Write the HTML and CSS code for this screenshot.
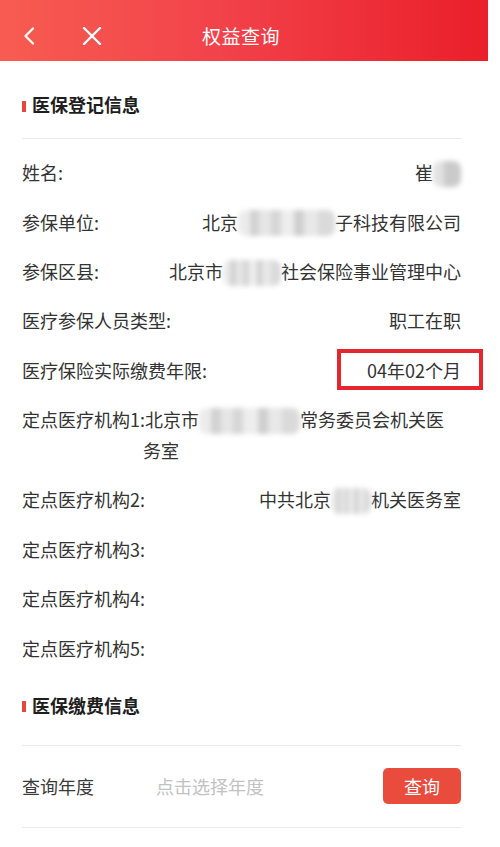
FILE: index.html
```html
<!DOCTYPE html>
<html lang="zh-CN">
<head>
<meta charset="utf-8">
<title>权益查询</title>
<link rel="stylesheet" href="styles.css">
</head>
<body>
<div class="app">
  <header class="topbar">
    <div class="nav-icons">
      <svg class="ico-back" width="12" height="18" viewBox="0 0 12 18"><polyline points="10,1.5 2.5,9 10,16.5" fill="none" stroke="#fff" stroke-width="2.2" stroke-linecap="round" stroke-linejoin="round"/></svg>
      <svg class="ico-close" width="20" height="18" viewBox="0 0 20 18"><path d="M2 1 L18 17 M18 1 L2 17" fill="none" stroke="#fff" stroke-width="2.4" stroke-linecap="round"/></svg>
    </div>
    <div class="topbar-title">权益查询</div>
    <div class="nav-spacer"></div>
  </header>

  <section class="section">
    <h2 class="sec-title first"><span class="bar"></span>医保登记信息</h2>
    <div class="list">
      <div class="row"><span class="label">姓名:</span><span class="value">崔<span class="mosaic m-name"></span></span></div>
      <div class="row"><span class="label">参保单位:</span><span class="value">北京<span class="mosaic m-unit"></span>子科技有限公司</span></div>
      <div class="row"><span class="label">参保区县:</span><span class="value">北京市<span class="mosaic m-area"></span>社会保险事业管理中心</span></div>
      <div class="row"><span class="label">医疗参保人员类型:</span><span class="value">职工在职</span></div>
      <div class="row"><span class="label">医疗保险实际缴费年限:</span><span class="value marked">04年02个月</span></div>
      <div class="row block"><span class="label">定点医疗机构1:</span><span class="value-inline">北京市<span class="mosaic m-org1"></span>常务委员会机关医</span><span class="cont">务室</span></div>
      <div class="row"><span class="label">定点医疗机构2:</span><span class="value">中共北京<span class="mosaic m-org2"></span>机关医务室</span></div>
      <div class="row"><span class="label">定点医疗机构3:</span><span class="value"></span></div>
      <div class="row"><span class="label">定点医疗机构4:</span><span class="value"></span></div>
      <div class="row"><span class="label">定点医疗机构5:</span><span class="value"></span></div>
    </div>
  </section>

  <section class="section">
    <h2 class="sec-title second"><span class="bar"></span>医保缴费信息</h2>
    <div class="query-row">
      <span class="q-label">查询年度</span>
      <span class="q-placeholder">点击选择年度</span>
      <button class="q-btn">查询</button>
    </div>
  </section>
</div>
</body>
</html>
```

FILE: styles.css
```css
* { box-sizing: border-box; }
html, body { margin: 0; padding: 0; background: #fff; }
body {
  font-family: "Noto Sans CJK SC", "Noto Sans", sans-serif;
  color: #333;
  font-size: 18px;
}
.app { width: 488px; }

.topbar {
  height: 61px;
  padding-top: 11px;
  display: grid;
  grid-template-columns: 112px 1fr 118px;
  align-items: center;
  background: linear-gradient(90deg, #f75c51 0%, #f2424a 45%, #ea1f2a 100%);
  color: #fff;
}
.nav-icons {
  display: flex;
  align-items: center;
  padding-left: 23px;
  gap: 47px;
}
.ico-back, .ico-close { display: block; }
.topbar-title {
  text-align: center;
  font-size: 19px;
  letter-spacing: 0.5px;
  line-height: 26px;
}

.section { padding: 0 27px 0 22px; }
.sec-title {
  margin: 0;
  display: flex;
  align-items: center;
  font-size: 18px;
  font-weight: 700;
  line-height: 25px;
  color: #1e1e1e;
  border-bottom: 1px solid #e9e9e9;
}
.sec-title.first { padding: 31px 0 21px; }
.sec-title.second { padding: 20px 0 27px; }
.bar {
  width: 4px;
  height: 11px;
  margin: 3px 6px 0 0;
  background: #e5473c;
  flex-shrink: 0;
}

.list { padding-top: 9px; }
.row {
  display: flex;
  justify-content: space-between;
  padding: 9.2px 0;
  line-height: 31px;
  white-space: nowrap;
}
.row.block { display: block; }
.label { flex-shrink: 0; }
.value { text-align: right; }
.cont { display: block; padding-left: 121px; }

.marked { position: relative; }
.marked::after {
  content: "";
  position: absolute;
  left: -30px;
  right: -22px;
  top: -6px;
  bottom: -4px;
  border: 4px solid #e6262e;
}

.mosaic {
  display: inline-block;
  vertical-align: middle;
  height: 26px;
  margin-top: -3px;
  border-radius: 8px;
  filter: blur(2.4px);
  background: linear-gradient(90deg,
    #ececec 0 12%, #d2d2d2 12% 22%, #e6e6e6 22% 34%, #d6d6d6 34% 44%,
    #eeeeee 44% 58%, #cfcfcf 58% 68%, #e8e8e8 68% 82%, #dadada 82% 100%);
}
.m-name { width: 28px; background: linear-gradient(90deg, #e2e2e2 0 40%, #cacaca 40% 100%); }
.m-unit { width: 97px; }
.m-area { width: 58px; }
.m-org1 { width: 101px; }
.m-org2 { width: 40px; }

.query-row {
  display: flex;
  align-items: center;
  height: 82px;
  border-bottom: 1px solid #e9e9e9;
}
.q-label { width: 134px; color: #3a3a3a; }
.q-placeholder { flex: 1; color: #c2c2c2; }
.q-btn {
  width: 78px;
  height: 36px;
  border: none;
  border-radius: 5px;
  background: #e94b3d;
  color: #fff;
  font-family: inherit;
  font-size: 18px;
  padding: 0;
}
```
